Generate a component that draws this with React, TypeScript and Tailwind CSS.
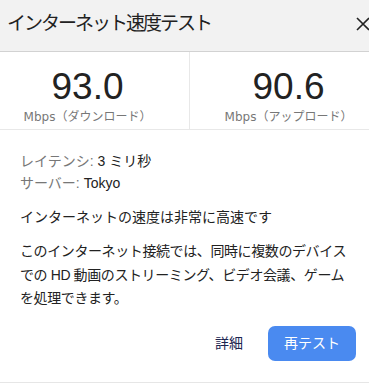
import React from 'react';

const jp = { fontFamily: '"Liberation Sans", "Noto Sans CJK JP", sans-serif' };

function Stat({ value, label, className }: { value: string; label: string; className: string }) {
  return (
    <div className={`flex flex-col items-center pt-[15px] ${className}`}>
      <p className="text-[37px] leading-[40px] text-[#222]">{value}</p>
      <p className="text-[12px] leading-[16px] text-[#777] mt-[2px]">
        <span style={{ fontFamily: '"DejaVu Sans", sans-serif' }}>Mbps</span>
        {label}
      </p>
    </div>
  );
}

export default function App() {
  return (
    <div className="w-[369px] h-[390px] bg-white overflow-hidden" style={jp}>
      <div className="h-[52px] bg-[#f2f2f2] border-b border-[#d2d2d2] flex items-center justify-between pl-[7px]">
        <h1 className="text-[19px] tracking-[-2px] text-[#222] pb-[2px]">インターネット速度テスト</h1>
        <svg width="14" height="14" viewBox="0 0 14 14" className="mb-[4px] mr-[-1px]">
          <path d="M1 1L13 13M13 1L1 13" stroke="#222" strokeWidth="1.6" />
        </svg>
      </div>

      <div className="flex h-[78px] border-b border-[#e8e8e8]">
        <Stat value="93.0" label="（ダウンロード）" className="w-[189px] pr-[14px]" />
        <div className="w-px bg-[#e8e8e8]" />
        <Stat value="90.6" label="（アップロード）" className="flex-1 pl-[18px]" />
      </div>

      <div className="px-[20px] pt-[20px] text-[14px] text-[#222]">
        <div className="leading-[22px]">
          <p><span className="text-[#777]">レイテンシ: </span>3 ミリ秒</p>
          <p><span className="text-[#777]">サーバー: </span>Tokyo</p>
        </div>
        <p className="mt-[12px] leading-[22px]">インターネットの速度は非常に高速です</p>
        <p className="mt-[12px] leading-[23.5px] whitespace-nowrap tracking-[-0.4px]">
          このインターネット接続では、同時に複数のデバイス<br />
          での HD 動画のストリーミング、ビデオ会議、ゲーム<br />
          を処理できます。
        </p>
        <div className="flex justify-end items-center gap-[25px] mt-[15px] mr-[-7px]">
          <button className="text-[14px] text-[#1b2550]">詳細</button>
          <button className="w-[88px] h-[35px] rounded-[7px] bg-[#4a8af0] text-white text-[14px]">再テスト</button>
        </div>
      </div>
      <div className="mt-[21px] border-b border-[#e6e6e6]" />
    </div>
  );
}
